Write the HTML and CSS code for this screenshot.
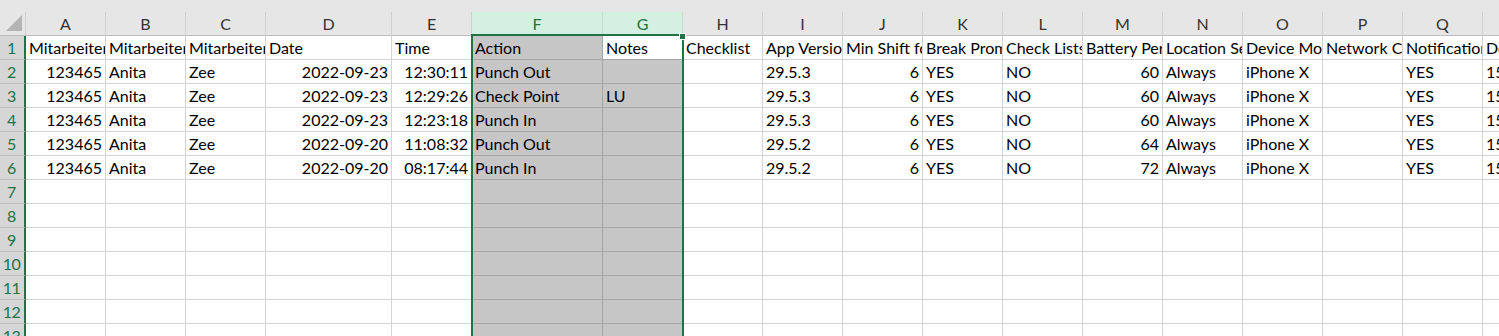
FILE: index.html
```html
<!DOCTYPE html>
<html>
<head>
<meta charset="utf-8">
<link rel="stylesheet" href="styles.css">
</head>
<body>
<div class="app">
  <div class="topband"></div>
  <div class="sheet">
    <!-- column headers -->
    <div class="corner"><svg width="26" height="24" viewBox="0 0 26 24"><polygon points="22,3 22,19 6,19" fill="#b4b4b4"/></svg></div>
    <div class="ch">A</div><div class="ch">B</div><div class="ch">C</div><div class="ch">D</div><div class="ch">E</div>
    <div class="ch chs">F</div><div class="ch chs">G</div>
    <div class="ch">H</div><div class="ch">I</div><div class="ch">J</div><div class="ch">K</div><div class="ch">L</div><div class="ch">M</div><div class="ch">N</div><div class="ch">O</div><div class="ch">P</div><div class="ch">Q</div><div class="ch">R</div>

    <!-- row 1 -->
    <div class="rh">1</div>
    <div class="c">Mitarbeiter ID</div><div class="c">Mitarbeiter Vorname</div><div class="c">Mitarbeiter Nachname</div><div class="c">Date</div><div class="c">Time</div>
    <div class="c s">Action</div><div class="c s active">Notes</div>
    <div class="c">Checklist</div><div class="c">App Version</div><div class="c">Min Shift for Break</div><div class="c">Break Prompt</div><div class="c">Check Lists Enabled</div><div class="c">Battery Percentage</div><div class="c">Location Services</div><div class="c">Device Model</div><div class="c">Network Connection</div><div class="c">Notifications</div><div class="c">Device OS</div>

    <!-- row 2 -->
    <div class="rh">2</div>
    <div class="c r">123465</div><div class="c">Anita</div><div class="c">Zee</div><div class="c r">2022-09-23</div><div class="c r">12:30:11</div>
    <div class="c s">Punch Out</div><div class="c s"></div>
    <div class="c"></div><div class="c">29.5.3</div><div class="c r">6</div><div class="c">YES</div><div class="c">NO</div><div class="c r">60</div><div class="c">Always</div><div class="c">iPhone X</div><div class="c"></div><div class="c">YES</div><div class="c">15.6.1</div>

    <!-- row 3 -->
    <div class="rh">3</div>
    <div class="c r">123465</div><div class="c">Anita</div><div class="c">Zee</div><div class="c r">2022-09-23</div><div class="c r">12:29:26</div>
    <div class="c s">Check Point</div><div class="c s">LU</div>
    <div class="c"></div><div class="c">29.5.3</div><div class="c r">6</div><div class="c">YES</div><div class="c">NO</div><div class="c r">60</div><div class="c">Always</div><div class="c">iPhone X</div><div class="c"></div><div class="c">YES</div><div class="c">15.6.1</div>

    <!-- row 4 -->
    <div class="rh">4</div>
    <div class="c r">123465</div><div class="c">Anita</div><div class="c">Zee</div><div class="c r">2022-09-23</div><div class="c r">12:23:18</div>
    <div class="c s">Punch In</div><div class="c s"></div>
    <div class="c"></div><div class="c">29.5.3</div><div class="c r">6</div><div class="c">YES</div><div class="c">NO</div><div class="c r">60</div><div class="c">Always</div><div class="c">iPhone X</div><div class="c"></div><div class="c">YES</div><div class="c">15.6.1</div>

    <!-- row 5 -->
    <div class="rh">5</div>
    <div class="c r">123465</div><div class="c">Anita</div><div class="c">Zee</div><div class="c r">2022-09-20</div><div class="c r">11:08:32</div>
    <div class="c s">Punch Out</div><div class="c s"></div>
    <div class="c"></div><div class="c">29.5.2</div><div class="c r">6</div><div class="c">YES</div><div class="c">NO</div><div class="c r">64</div><div class="c">Always</div><div class="c">iPhone X</div><div class="c"></div><div class="c">YES</div><div class="c">15.6.1</div>

    <!-- row 6 -->
    <div class="rh">6</div>
    <div class="c r">123465</div><div class="c">Anita</div><div class="c">Zee</div><div class="c r">2022-09-20</div><div class="c r">08:17:44</div>
    <div class="c s">Punch In</div><div class="c s"></div>
    <div class="c"></div><div class="c">29.5.2</div><div class="c r">6</div><div class="c">YES</div><div class="c">NO</div><div class="c r">72</div><div class="c">Always</div><div class="c">iPhone X</div><div class="c"></div><div class="c">YES</div><div class="c">15.6.1</div>

    <!-- rows 7-13 (empty) -->
    <div class="rh">7</div>
    <div class="c"></div><div class="c"></div><div class="c"></div><div class="c"></div><div class="c"></div><div class="c s"></div><div class="c s"></div><div class="c"></div><div class="c"></div><div class="c"></div><div class="c"></div><div class="c"></div><div class="c"></div><div class="c"></div><div class="c"></div><div class="c"></div><div class="c"></div><div class="c"></div>
    <div class="rh">8</div>
    <div class="c"></div><div class="c"></div><div class="c"></div><div class="c"></div><div class="c"></div><div class="c s"></div><div class="c s"></div><div class="c"></div><div class="c"></div><div class="c"></div><div class="c"></div><div class="c"></div><div class="c"></div><div class="c"></div><div class="c"></div><div class="c"></div><div class="c"></div><div class="c"></div>
    <div class="rh">9</div>
    <div class="c"></div><div class="c"></div><div class="c"></div><div class="c"></div><div class="c"></div><div class="c s"></div><div class="c s"></div><div class="c"></div><div class="c"></div><div class="c"></div><div class="c"></div><div class="c"></div><div class="c"></div><div class="c"></div><div class="c"></div><div class="c"></div><div class="c"></div><div class="c"></div>
    <div class="rh">10</div>
    <div class="c"></div><div class="c"></div><div class="c"></div><div class="c"></div><div class="c"></div><div class="c s"></div><div class="c s"></div><div class="c"></div><div class="c"></div><div class="c"></div><div class="c"></div><div class="c"></div><div class="c"></div><div class="c"></div><div class="c"></div><div class="c"></div><div class="c"></div><div class="c"></div>
    <div class="rh">11</div>
    <div class="c"></div><div class="c"></div><div class="c"></div><div class="c"></div><div class="c"></div><div class="c s"></div><div class="c s"></div><div class="c"></div><div class="c"></div><div class="c"></div><div class="c"></div><div class="c"></div><div class="c"></div><div class="c"></div><div class="c"></div><div class="c"></div><div class="c"></div><div class="c"></div>
    <div class="rh">12</div>
    <div class="c"></div><div class="c"></div><div class="c"></div><div class="c"></div><div class="c"></div><div class="c s"></div><div class="c s"></div><div class="c"></div><div class="c"></div><div class="c"></div><div class="c"></div><div class="c"></div><div class="c"></div><div class="c"></div><div class="c"></div><div class="c"></div><div class="c"></div><div class="c"></div>
    <div class="rh">13</div>
    <div class="c"></div><div class="c"></div><div class="c"></div><div class="c"></div><div class="c"></div><div class="c s"></div><div class="c s"></div><div class="c"></div><div class="c"></div><div class="c"></div><div class="c"></div><div class="c"></div><div class="c"></div><div class="c"></div><div class="c"></div><div class="c"></div><div class="c"></div><div class="c"></div>

    <!-- selection outline (overlay) -->
    <div class="selection"></div>
    <div class="fill-handle"></div>
  </div>
</div>
</body>
</html>
```

FILE: styles.css
```css
* { box-sizing: border-box; }
html, body {
  margin: 0;
  padding: 0;
  width: 1499px;
  height: 336px;
  overflow: hidden;
  background: #ffffff;
}
.app {
  width: 1499px;
  height: 336px;
  overflow: hidden;
  font-family: Lato, "Open Sans", "Liberation Sans", sans-serif;
  font-size: 16px;
  color: #000;
}
.topband {
  height: 12px;
  background: #e6e6e6;
}
.sheet {
  position: relative;
  display: grid;
  grid-template-columns: 26px 80px 80px 80px 126px 80px 131px 80px 80px 80px 80px 80px 80px 80px 80px 80px 80px 80px 80px;
  grid-auto-rows: 24px;
  width: max-content;
}
.corner {
  background: #e6e6e6;
  border-right: 1px solid #d0d0d0;
  border-bottom: 1px solid #bdbdbd;
}
.corner svg { display: block; }
.ch {
  background: #e6e6e6;
  border-right: 1px solid #d0d0d0;
  border-bottom: 1px solid #bdbdbd;
  color: #333;
  text-align: center;
  line-height: 23px;
  font-size: 16px;
}
.chs {
  background: #d3f0e0;
  color: #217346;
  border-right-color: #c3dccd;
  border-bottom: 2px solid #217346;
}
.rh {
  background: #d6d6d6;
  border-right: 2px solid #217346;
  border-bottom: 1px solid #bebebe;
  color: #217346;
  text-align: center;
  line-height: 24px;
  padding-right: 1px;
  font-size: 16px;
  letter-spacing: -0.5px;
}
.c {
  border-right: 1px solid #d4d4d4;
  border-bottom: 1px solid #d4d4d4;
  padding: 0 3px 0 3px;
  line-height: 24px;
  white-space: nowrap;
  overflow: hidden;
}
.c.r { text-align: right; }
.c.s {
  background: #c6c6c6;
  border-right-color: #a6a6a6;
  border-bottom-color: #a6a6a6;
}
.c.s.active { background: #ffffff; }
.selection {
  position: absolute;
  left: 471px;
  top: 22px;
  width: 213px;
  height: 400px;
  border: 2px solid #217346;
  pointer-events: none;
}
.fill-handle {
  position: absolute;
  left: 679px;
  top: 21px;
  width: 7px;
  height: 7px;
  background: #217346;
  border: 1px solid #ffffff;
}
```
